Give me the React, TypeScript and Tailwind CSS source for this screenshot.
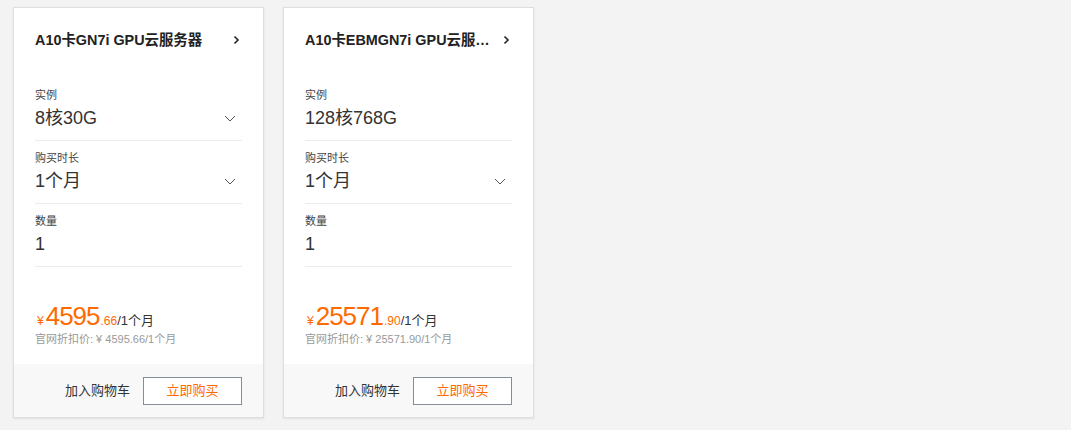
import { FunctionComponent } from "react";

type SpecRow = {
  label: string;
  value: string;
  select: boolean;
};

type ProductCardProps = {
  title: string;
  specs: SpecRow[];
  priceInt: string;
  priceDec: string;
  original: string;
};

const products: ProductCardProps[] = [
  {
    title: "A10卡GN7i GPU云服务器",
    specs: [
      { label: "实例", value: "8核30G", select: true },
      { label: "购买时长", value: "1个月", select: true },
      { label: "数量", value: "1", select: false },
    ],
    priceInt: "4595",
    priceDec: ".66",
    original: "4595.66",
  },
  {
    title: "A10卡EBMGN7i GPU云服务器",
    specs: [
      { label: "实例", value: "128核768G", select: false },
      { label: "购买时长", value: "1个月", select: true },
      { label: "数量", value: "1", select: false },
    ],
    priceInt: "25571",
    priceDec: ".90",
    original: "25571.90",
  },
];

const ChevronRight = () => (
  <svg width="12" height="12" viewBox="0 0 12 12" className="shrink-0">
    <path d="M4.5 2.5 L8 6 L4.5 9.5" fill="none" stroke="#222" strokeWidth="1.6" />
  </svg>
);

const ChevronDown = () => (
  <svg width="12" height="12" viewBox="0 0 12 12" className="mr-[6px] shrink-0">
    <path d="M1 4 L6 9 L11 4" fill="none" stroke="#555" strokeWidth="1" />
  </svg>
);

const ProductCard: FunctionComponent<ProductCardProps> = ({
  title,
  specs,
  priceInt,
  priceDec,
  original,
}) => {
  return (
    <div className="flex h-[411px] w-[251px] flex-col border border-[#dedede] bg-white shadow-[0_1px_2px_rgba(0,0,0,0.08)]">
      <div className="px-[21px]">
        <div className="flex items-center gap-[10px] pt-[22px] pb-[28px]">
          <p className="min-w-0 flex-1 truncate text-[14.4px] font-bold leading-[20px] text-[#222]">
            {title}
          </p>
          <ChevronRight />
        </div>

        {specs.map((row) => (
          <div key={row.label} className="border-b border-[#ebebeb] pt-[9px] pb-[10px]">
            <p className="text-[11px] leading-[16px] text-[#444]">{row.label}</p>
            <div className="mt-[3px] flex items-center justify-between">
              <p className="text-[18px] leading-[24px] text-[#333]">{row.value}</p>
              {row.select && <ChevronDown />}
            </div>
          </div>
        ))}

        <div className="pt-[34px]">
          <div className="flex h-[30px] items-baseline whitespace-nowrap">
            <span className="mr-[2px] ml-[2px] text-[12px] text-[#ff6a00]">¥</span>
            <span className="text-[26px] leading-[30px] tracking-[-1px] text-[#ff6a00]">{priceInt}</span>
            <span className="ml-[1px] text-[12px] text-[#ff6a00]">{priceDec}</span>
            <span className="text-[13px] text-[#333]">/1个月</span>
          </div>
          <p className="whitespace-nowrap text-[11px] leading-[16px] text-[#999]">
            官网折扣价: ¥ {original}/1个月
          </p>
        </div>
      </div>

      <div className="mt-auto flex h-[53px] items-center justify-end gap-[13px] bg-[#f8f8f8] px-[21px]">
        <span className="text-[13px] text-[#333]">加入购物车</span>
        <button className="h-[28px] w-[99px] border border-[#878c9a] bg-white text-[13px] text-[#ff6a00]">
          立即购买
        </button>
      </div>
    </div>
  );
};

export default function App() {
  return (
    <div
      className="flex h-[430px] w-[1071px] gap-[19px] bg-[#f3f3f3] pt-[7px] pl-[13px]"
      style={{ fontFamily: '"Liberation Sans", Arial, "Noto Sans CJK SC", sans-serif' }}
    >
      {products.map((p) => (
        <ProductCard key={p.title} {...p} />
      ))}
    </div>
  );
}
